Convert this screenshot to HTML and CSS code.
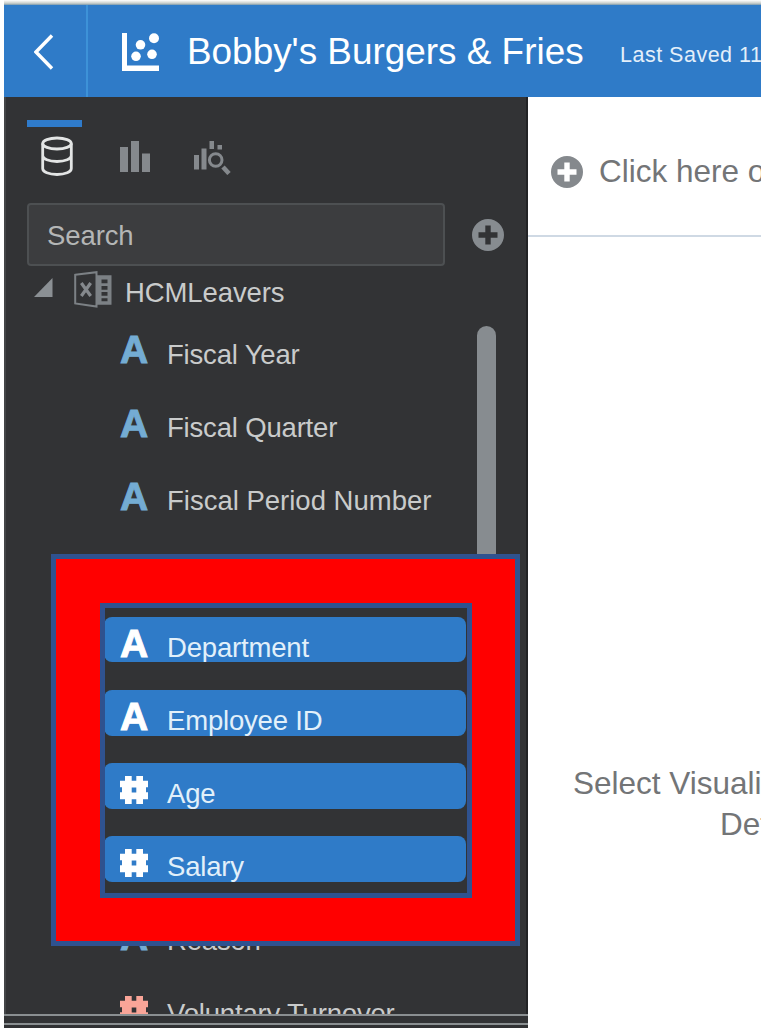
FILE: index.html
```html
<!DOCTYPE html>
<html lang="en">
<head>
<meta charset="utf-8">
<title>Bobby's Burgers &amp; Fries</title>
<link rel="stylesheet" href="styles.css">
</head>
<body>
<svg class="defs" width="0" height="0" aria-hidden="true">
  <symbol id="hash" viewBox="0 0 28 28"><path d="M5 0h6.700v4.700h4.600V0H23v4.700h5v6.600h-2v5h2v7h-5V28h-6.700v-4.700h-4.600V28H5v-4.700H0v-7h2v-5H0V4.700h5zM11.700 11.500v5h4.600v-5z" fill-rule="evenodd"/></symbol>
  <symbol id="plus" viewBox="0 0 32 32"><path fill-rule="evenodd" d="M16 0a16 16 0 1 1 0 32a16 16 0 0 1 0-32zM13.300 6.500v6.800H6.500v5.400h6.800v6.800h5.400v-6.800h6.800v-5.400h-6.800V6.500z"/></symbol>
</svg>
<div class="app">
  <header class="topbar">
    <div class="back"><svg width="20" height="36" viewBox="0 0 20 36"><path d="M18 1.500L2 18l16 16.500" fill="none" stroke="#fff" stroke-width="3.400"/></svg></div>
    <svg class="logo" width="38" height="38" viewBox="0 0 38 38" fill="#fff"><path d="M0 0h5v32.500h32V38H0z"/><circle cx="32" cy="5.300" r="5"/><circle cx="18.500" cy="11.800" r="4.800"/><circle cx="30" cy="21.300" r="4.800"/><circle cx="14" cy="23.300" r="4.800"/></svg>
    <h1 class="title">Bobby's Burgers &amp; Fries</h1>
    <span class="saved">Last Saved 11</span>
  </header>
  <div class="body">
    <aside class="sidebar">
      <nav class="tabs">
        <div class="tab active"><svg width="32" height="40" viewBox="0 0 32 40" fill="none" stroke="#e3e5e5" stroke-width="2.800"><ellipse cx="16" cy="7.500" rx="14.300" ry="5.500"/><path d="M1.700 7.500v25c0 3.500 6 6 14.300 6s14.300-2.500 14.300-6v-25M1.700 19.500c0 3.500 6 6 14.300 6s14.300-2.500 14.300-6"/></svg></div>
        <div class="tab"><svg width="30" height="31" viewBox="0 0 30 31" fill="#85898d"><path d="M0 6h8v25H0zM11 0h8v31h-8zM22 12.500h8V31h-8z"/></svg></div>
        <div class="tab explore"><svg width="37" height="34" viewBox="0 0 37 34" fill="#85898d"><path d="M0 14h5v14.500H0zM7.500 7.500h5v21h-5zM15.500 0h4.500v8h-4.500zM23.500 4H28v4.500h-4.500z"/><circle cx="21.700" cy="19" r="6.300" fill="none" stroke="#85898d" stroke-width="3"/><path d="M29 26l6 6.500" stroke="#85898d" stroke-width="4.600"/></svg></div>
      </nav>
      <div class="searchrow">
        <div class="search">Search</div>
        <svg class="plus" width="32" height="32"><use href="#plus"/></svg>
      </div>
      <div class="dataset">
        <svg class="twist" width="19" height="19" viewBox="0 0 19 19"><path d="M0 19h18.500V0z" fill="#8b9094"/></svg>
        <svg class="excel" width="38" height="37" viewBox="0 0 38 37"><path d="M1.200 3.800L22.500 1.200v34.300L1.200 32.500z" fill="none" stroke="#7c8185" stroke-width="2"/><path fill="#7c8185" fill-rule="evenodd" d="M23 4.300h14.500v29.500H23zM27.500 8.500v3.800h6V8.500zM27.500 15v3.800h6V15zM27.500 21v3.800h6V21zM27.500 27.300v3h6v-3z"/><path d="M7.300 12l9.400 13M16.700 12L7.300 25" stroke="#85898d" stroke-width="3.200"/></svg>
        <span>HCMLeavers</span>
      </div>
      <div class="listwrap">
        <div class="list">
          <div class="row first"><b class="a">A</b><span>Fiscal Year</span></div>
          <div class="row"><b class="a">A</b><span>Fiscal Quarter</span></div>
          <div class="row"><b class="a">A</b><span class="wide">Fiscal Period Number</span></div>
          <div class="row"></div>
          <div class="row sel"><b class="a">A</b><span>Department</span></div>
          <div class="row sel"><b class="a">A</b><span>Employee ID</span></div>
          <div class="row sel"><svg class="hash"><use href="#hash"/></svg><span>Age</span></div>
          <div class="row sel"><svg class="hash"><use href="#hash"/></svg><span>Salary</span></div>
          <div class="row"><b class="a">A</b><span>Reason</span></div>
          <div class="row measure"><svg class="hash"><use href="#hash"/></svg><span>Voluntary Turnover</span></div>
        </div>
        <div class="scroll"></div>
      </div>
      <div class="splitter"></div>
    </aside>
    <main class="canvas">
      <div class="filters"><svg class="plus" width="32" height="32"><use href="#plus"/></svg><span>Click here or drag</span></div>
      <div class="hint"><div class="line1">Select Visualization</div><div class="line2">Default</div></div>
    </main>
  </div>
  <div class="frame"><div class="band"><div class="inner"></div></div></div>
</div>
</body>
</html>
```
FILE: styles.css
```css
* { box-sizing: border-box; }
body { margin: 0; background: #fff; font-family: "Liberation Sans", Arial, sans-serif; overflow: hidden; }
svg { display: block; flex: none; }
.defs { position: absolute; }
.app { position: relative; width: 757px; height: 1028px; margin-left: 4px; overflow: hidden; display: flex; flex-direction: column; white-space: nowrap; }
.topbar { height: 97px; flex: none; display: flex; background: #2f7bc8; border-top: 5px solid #b9bfbe; color: #fff; }
.app::before { content: ""; position: absolute; left: 0; top: 0; width: 100%; height: 5px; background: linear-gradient(#fff, #e3e5e3 35%, #c9ceca 65%, #7898ae); }
.back { width: 84px; flex: none; border-right: 2px solid #3d92d8; padding: 29px 0 0 30px; }
.logo { margin: 28px 0 0 34px; }
.title { margin: 0 0 0 27px; width: 433px; flex: none; font-size: 36.900px; font-weight: 400; line-height: 92px; padding-top: 1px; }
.saved { flex: none; font-size: 21.500px; letter-spacing: .5px; line-height: 101px; color: #e3effa; }
.body { display: flex; flex: 1; min-height: 0; }
.sidebar { width: 524px; flex: none; background: #323335; border-left: 2px solid #434547; border-right: 2px solid #222325; display: flex; flex-direction: column; color: #c9cbcb; font-size: 27.500px; }
.tabs { display: flex; height: 106px; padding: 23px 0 0 21px; align-items: flex-start; }
.tab { width: 55px; margin-right: 38px; padding-top: 21px; }
.tab:nth-child(2) { margin-right: 19px; }
.active { border-top: 7px solid #2f7bcb; padding: 9px 0 0 14px; }
.explore { margin: 0; }
.searchrow { display: flex; align-items: center; height: 63px; padding-left: 21px; }
.search { width: 418px; height: 63px; border: 2px solid #4d5052; border-radius: 4px; background: #3c3d3f; color: #b4b6b6; line-height: 62px; padding-left: 18px; letter-spacing: -.1px; }
.searchrow .plus { margin-left: 27px; fill: #878c90; }
.dataset { display: flex; height: 58px; flex: none; padding-left: 28px; align-items: flex-start; line-height: 54px; }
.twist { margin-top: 12px; }
.excel { margin: 5px 0 0 21px; }
.dataset span { margin-left: 13px; letter-spacing: -.1px; }
.listwrap { display: flex; height: 690px; flex: none; overflow: hidden; }
.list { width: 371px; flex: none; padding-left: 98px; }
.row { display: flex; align-items: flex-start; height: 45.700px; width: 362px; margin-bottom: 27.500px; padding-left: 16px; border-radius: 8px; overflow: hidden; line-height: 31px; }
.row span { padding-top: 15px; letter-spacing: -.18px; }
.row .wide { letter-spacing: 0; }
.a { width: 30px; margin: 5px 17px 0 0; font-size: 39px; line-height: 44px; color: #74acd3; -webkit-text-stroke: 1px currentColor; }
.first .a { margin-top: 4px; }
.hash { width: 28px; height: 28px; margin: 13px 19px 0 0; fill: #fff; }
.sel { background: #2f7bc8; color: #e2f0fa; }
.sel .a { color: #fff; }
.measure .hash { fill: #f9a598; }
.scroll { width: 19px; margin: 2px 0 0 100px; height: 300px; border-radius: 10px; background: #878c90; }
.splitter { height: 14px; margin: 0 -2px; background: linear-gradient(#8a8f91 0 2px, #323335 2px 9px, #8a8f91 9px 11px, #303133 11px); }
.canvas { flex: 1; min-width: 0; overflow: hidden; color: #737577; font-size: 31.500px; }
.filters { height: 140px; border-bottom: 2px solid #cfd9e4; display: flex; padding-left: 23px; line-height: 148px; }
.filters .plus { margin: 59px 16px 0 0; fill: #85898d; }
.hint { padding: 526px 0 0 45px; line-height: 41px; }
.line2 { padding-left: 147px; }
.frame { position: absolute; left: 47px; top: 554px; width: 469px; height: 392px; border: 5px solid #2f528f; }
.band { height: 100%; border: solid #f00; border-width: 44px 43px 43px 44px; }
.inner { height: 100%; border: 5px solid #2f528f; }
```
